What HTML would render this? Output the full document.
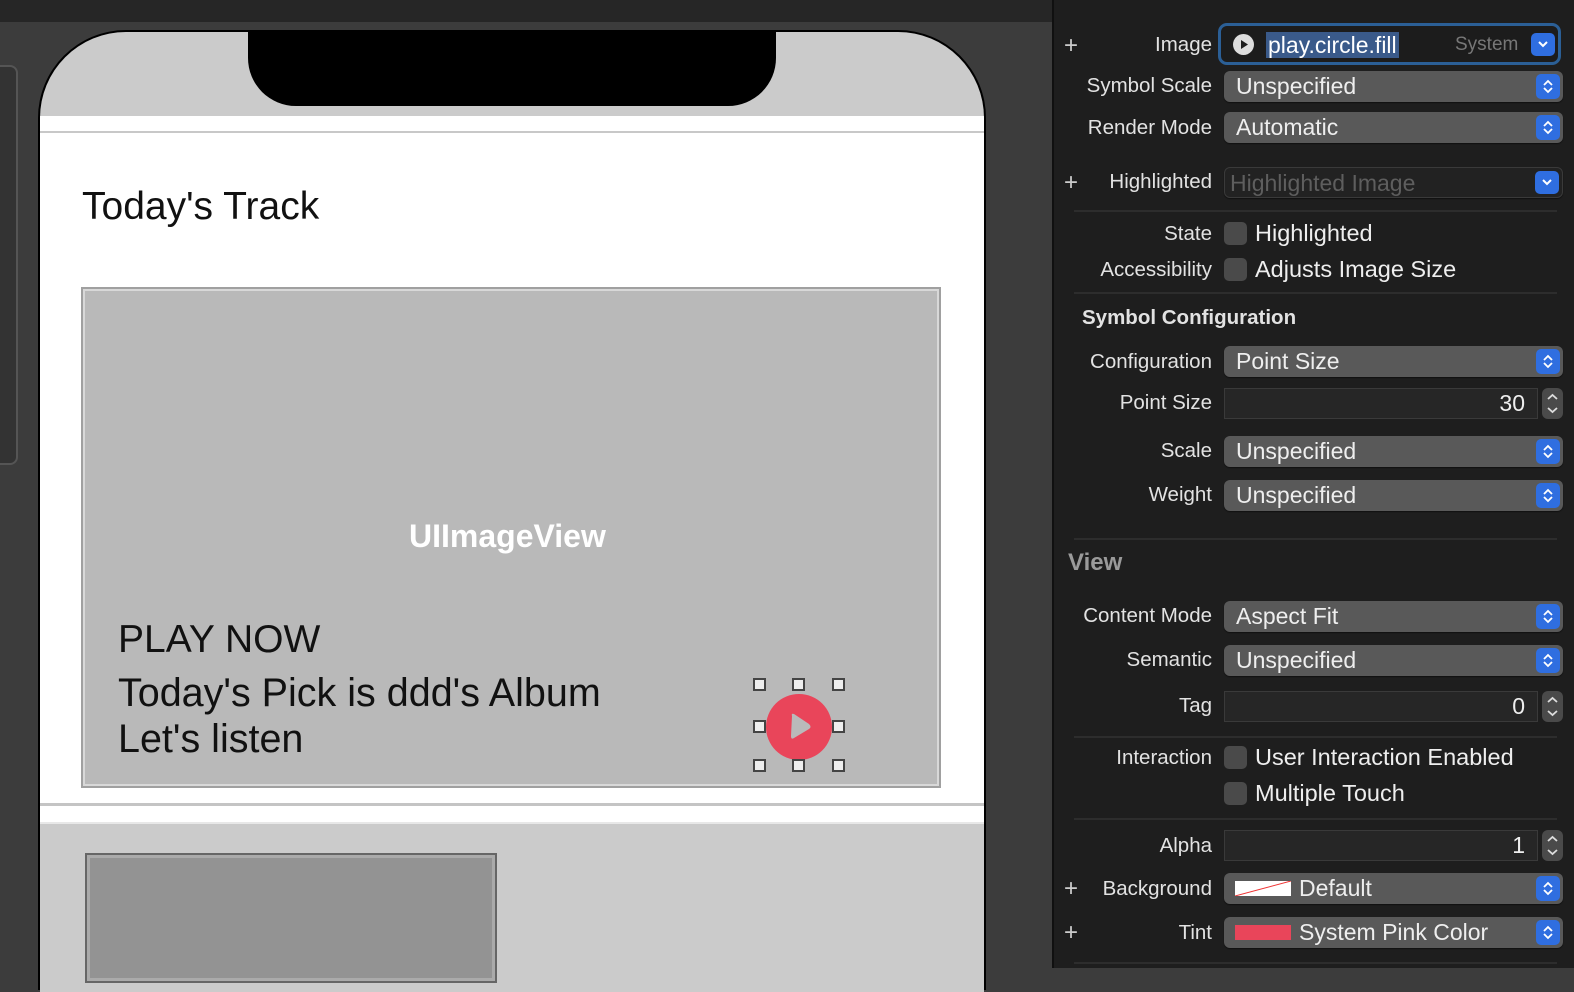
<!DOCTYPE html>
<html><head><meta charset="utf-8"><style>
*{margin:0;padding:0;box-sizing:border-box}
body{width:1574px;height:968px;overflow:hidden;background:#3c3c3c;font-family:"Liberation Sans",sans-serif;position:relative}
.a{position:absolute}
.lbl{position:absolute;right:362px;color:#e2e2e2;font-size:20.5px;white-space:nowrap;line-height:24px}
.pop{position:absolute;left:1224px;width:339px;height:31px;background:#595959;border-radius:6px;color:#eee;font-size:23px;line-height:31px;padding-left:12px;box-shadow:0 1px 1px #111;white-space:nowrap}
.pop .bb{position:absolute;right:3px;top:3px;width:24px;height:25px;background:#2f6ee0;border-radius:5px}
.pop .bb svg{position:absolute;left:6px;top:5px}
.fld{position:absolute;left:1224px;width:314px;height:31px;background:#262626;border:1px solid #3a3a3a;color:#eee;font-size:23px;line-height:29px;text-align:right;padding-right:12px}
.stp{position:absolute;left:1542px;width:21px;height:31px;background:#4a4a4a;border-radius:6px}
.cb{position:absolute;left:1224px;width:23px;height:23px;background:#4a4a4a;border-radius:5px}
.cbt{position:absolute;left:1255px;color:#eee;font-size:23.5px;line-height:24px;white-space:nowrap}
.div{position:absolute;left:1074px;width:483px;height:2px;background:#2d2d2d}
.plus{position:absolute;left:1064px;color:#ccc;font-size:24px;line-height:24px}
.h{position:absolute;width:13px;height:13px;background:#eee;border:2px solid #444}
</style></head><body>
<div class="a" style="left:0;top:0;width:1052px;height:22px;background:#262626"></div>
<div class="a" style="left:-10px;top:65px;width:28px;height:400px;border:2px solid #555;border-radius:8px;background:#333"></div>
<!-- phone -->
<div class="a" style="left:38px;top:30px;width:948px;height:960px;background:#000;border-radius:88px 88px 0 0"></div>
<div class="a" style="left:40px;top:32px;width:944px;height:960px;background:#cbcbcb;border-radius:86px 86px 0 0;overflow:hidden">
  <div class="a" style="left:208px;top:-4px;width:528px;height:78px;background:#000;border-radius:0 0 48px 48px"></div>
  <div class="a" style="left:0;top:84px;width:944px;height:708px;background:#fff"></div>
  <div class="a" style="left:0;top:99px;width:944px;height:2px;background:#c8c8c8"></div>
  <div class="a" style="left:0;top:771px;width:944px;height:3px;background:#c4c4c4"></div>
  <div class="a" style="left:0;top:790px;width:944px;height:2px;background:#e8e8e8"></div>
</div>
<div class="a" style="left:82px;top:185px;font-size:39px;color:#111">Today's Track</div>
<div class="a" style="left:81px;top:287px;width:860px;height:501px;background:#b9b9b9;border:2px solid #a0a0a0;box-shadow:inset 0 0 0 2px #d8d8d8"></div>
<div class="a" style="left:409px;top:518px;font-size:32px;font-weight:bold;color:#fff">UIImageView</div>
<div class="a" style="left:118px;top:618px;font-size:39px;color:#111">PLAY NOW</div>
<div class="a" style="left:118px;top:670px;font-size:39.5px;color:#111;line-height:46px">Today's Pick is ddd's Album<br>Let's listen</div>
<div class="a" style="left:766px;top:694px;width:66px;height:66px;border-radius:50%;background:#e9455a"></div>
<svg class="a" style="left:766px;top:694px" width="66" height="66"><path d="M26 22 Q25 19 28 20 L43 30 Q46 33 43 35 L28 44 Q25 46 25 42 Z" fill="#bababa"/></svg>
<div class="h" style="left:753px;top:678px"></div><div class="h" style="left:792px;top:678px"></div><div class="h" style="left:832px;top:678px"></div>
<div class="h" style="left:753px;top:720px"></div><div class="h" style="left:832px;top:720px"></div>
<div class="h" style="left:753px;top:759px"></div><div class="h" style="left:792px;top:759px"></div><div class="h" style="left:832px;top:759px"></div>
<div class="a" style="left:85px;top:853px;width:412px;height:130px;background:#939393;border:2px solid #666;box-shadow:inset 0 0 0 3px #aaa"></div>
<!-- inspector -->
<div class="a" style="left:1052px;top:0;width:522px;height:968px;background:#1e1e1e;border-left:2px solid #101010"></div>
<div class="plus" style="top:34px">+</div>
<div class="lbl" style="top:33px">Image</div>
<div class="a" style="left:1218px;top:23px;width:343px;height:42px;border:3px solid #2b5f96;border-radius:9px;background:#1c1c1c"></div>
<div class="a" style="left:1233px;top:34px;width:21px;height:21px;border-radius:50%;background:#ddd"></div>
<svg class="a" style="left:1233px;top:34px" width="21" height="21"><path d="M8 6 L15 10.5 L8 15 Z" fill="#1c1c1c"/></svg>
<div class="a" style="left:1266px;top:32px;height:26px;background:#3a5a8a;color:#fff;font-size:23px;line-height:26px;padding:0 2px">play.circle.fill</div>
<div class="a" style="left:1455px;top:34px;color:#777;font-size:19px">System</div>
<div class="a" style="left:1531px;top:33px;width:24px;height:23px;background:#2f6ee0;border-radius:5px"><svg width="24" height="23"><path d="M8 9 L12 13 L16 9" stroke="#fff" stroke-width="2" fill="none"/></svg></div>

<div class="lbl" style="top:74px">Symbol Scale</div>
<div class="pop" style="top:71px">Unspecified<div class="bb"><svg width="12" height="15"><path d="M2 6 L6 2 L10 6 M2 9 L6 13 L10 9" stroke="#fff" stroke-width="1.8" fill="none"/></svg></div></div>
<div class="lbl" style="top:116px">Render Mode</div>
<div class="pop" style="top:112px">Automatic<div class="bb"><svg width="12" height="15"><path d="M2 6 L6 2 L10 6 M2 9 L6 13 L10 9" stroke="#fff" stroke-width="1.8" fill="none"/></svg></div></div>
<div class="plus" style="top:171px">+</div>
<div class="lbl" style="top:170px">Highlighted</div>
<div class="pop" style="top:167px;background:#222;border:1px solid #3a3a3a;color:#5e5e5e;padding-left:5px">Highlighted Image<div class="a" style="right:3px;top:3px;width:24px;height:23px;background:#2f6ee0;border-radius:5px"><svg width="24" height="23"><path d="M8 9 L12 13 L16 9" stroke="#fff" stroke-width="2" fill="none"/></svg></div></div>
<div class="div" style="top:210px"></div>
<div class="lbl" style="top:222px">State</div>
<div class="cb" style="top:222px"></div><div class="cbt" style="top:221px">Highlighted</div>
<div class="lbl" style="top:258px">Accessibility</div>
<div class="cb" style="top:258px"></div><div class="cbt" style="top:257px">Adjusts Image Size</div>
<div class="div" style="top:292px"></div>
<div class="a" style="left:1082px;top:306px;color:#e2e2e2;font-size:20.5px;font-weight:bold">Symbol Configuration</div>
<div class="lbl" style="top:350px">Configuration</div>
<div class="pop" style="top:346px">Point Size<div class="bb"><svg width="12" height="15"><path d="M2 6 L6 2 L10 6 M2 9 L6 13 L10 9" stroke="#fff" stroke-width="1.8" fill="none"/></svg></div></div>
<div class="lbl" style="top:391px">Point Size</div>
<div class="fld" style="top:388px">30</div>
<div class="stp" style="top:388px"><svg width="21" height="31"><path d="M6 11 L10.5 7 L15 11 M6 20 L10.5 24 L15 20" stroke="#ddd" stroke-width="1.8" fill="none"/></svg></div>
<div class="lbl" style="top:439px">Scale</div>
<div class="pop" style="top:436px">Unspecified<div class="bb"><svg width="12" height="15"><path d="M2 6 L6 2 L10 6 M2 9 L6 13 L10 9" stroke="#fff" stroke-width="1.8" fill="none"/></svg></div></div>
<div class="lbl" style="top:483px">Weight</div>
<div class="pop" style="top:480px">Unspecified<div class="bb"><svg width="12" height="15"><path d="M2 6 L6 2 L10 6 M2 9 L6 13 L10 9" stroke="#fff" stroke-width="1.8" fill="none"/></svg></div></div>
<div class="div" style="top:538px"></div>
<div class="a" style="left:1068px;top:549px;color:#9a9a9a;font-size:24px;font-weight:bold">View</div>
<div class="lbl" style="top:604px">Content Mode</div>
<div class="pop" style="top:601px">Aspect Fit<div class="bb"><svg width="12" height="15"><path d="M2 6 L6 2 L10 6 M2 9 L6 13 L10 9" stroke="#fff" stroke-width="1.8" fill="none"/></svg></div></div>
<div class="lbl" style="top:648px">Semantic</div>
<div class="pop" style="top:645px">Unspecified<div class="bb"><svg width="12" height="15"><path d="M2 6 L6 2 L10 6 M2 9 L6 13 L10 9" stroke="#fff" stroke-width="1.8" fill="none"/></svg></div></div>
<div class="lbl" style="top:694px">Tag</div>
<div class="fld" style="top:691px">0</div>
<div class="stp" style="top:691px"><svg width="21" height="31"><path d="M6 11 L10.5 7 L15 11 M6 20 L10.5 24 L15 20" stroke="#ddd" stroke-width="1.8" fill="none"/></svg></div>
<div class="div" style="top:736px"></div>
<div class="lbl" style="top:746px">Interaction</div>
<div class="cb" style="top:746px"></div><div class="cbt" style="top:745px">User Interaction Enabled</div>
<div class="cb" style="top:782px"></div><div class="cbt" style="top:781px">Multiple Touch</div>
<div class="div" style="top:818px"></div>
<div class="lbl" style="top:834px">Alpha</div>
<div class="fld" style="top:830px">1</div>
<div class="stp" style="top:830px"><svg width="21" height="31"><path d="M6 11 L10.5 7 L15 11 M6 20 L10.5 24 L15 20" stroke="#ddd" stroke-width="1.8" fill="none"/></svg></div>
<div class="plus" style="top:877px">+</div>
<div class="lbl" style="top:877px">Background</div>
<div class="pop" style="top:873px;padding-left:75px">Default<div class="bb"><svg width="12" height="15"><path d="M2 6 L6 2 L10 6 M2 9 L6 13 L10 9" stroke="#fff" stroke-width="1.8" fill="none"/></svg></div>
<svg class="a" style="left:11px;top:8px" width="56" height="15"><rect width="56" height="15" fill="#fff"/><path d="M0 15 L56 0" stroke="#e33" stroke-width="1"/></svg></div>
<div class="plus" style="top:921px">+</div>
<div class="lbl" style="top:921px">Tint</div>
<div class="pop" style="top:917px;padding-left:75px">System Pink Color<div class="bb"><svg width="12" height="15"><path d="M2 6 L6 2 L10 6 M2 9 L6 13 L10 9" stroke="#fff" stroke-width="1.8" fill="none"/></svg></div>
<div class="a" style="left:11px;top:8px;width:56px;height:15px;background:#e9455a"></div></div>
<div class="div" style="top:962px"></div>
</body></html>
